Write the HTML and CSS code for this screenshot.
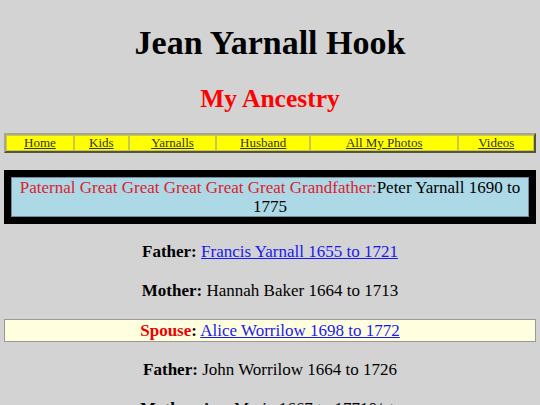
FILE: index.html
```html
<!DOCTYPE html>
<html>
<head>
<meta charset="utf-8">
<link rel="stylesheet" href="styles.css">
</head>
<body>
<h1 class="title">Jean Yarnall Hook</h1>
<h2 class="subtitle">My Ancestry</h2>
<table class="nav">
<tr>
<td><a href="#">Home</a></td>
<td><a href="#">Kids</a></td>
<td><a href="#">Yarnalls</a></td>
<td><a href="#">Husband</a></td>
<td><a href="#">All My Photos</a></td>
<td><a href="#">Videos</a></td>
</tr>
</table>
<div class="person-box">
<div class="person-inner"><span class="rel">Paternal Great Great Great Great Great Grandfather:</span>Peter Yarnall 1690 to 1775</div>
</div>
<p class="line"><b>Father:</b> <a class="link" href="#">Francis Yarnall 1655 to 1721</a></p>
<p class="line"><b>Mother:</b> Hannah Baker 1664 to 1713</p>
<div class="spouse"><b><span class="red">Spouse</span>:</b> <a class="link" href="#">Alice Worrilow 1698 to 1772</a></div>
<p class="line"><b>Father:</b> John Worrilow 1664 to 1726</p>
<p class="line"><b>Mother:</b>Ann Maria 1667 to 17710/p&gt;</p>
</body>
</html>
```
FILE: styles.css
```css
html { background: #d3d3d3; }
body {
  margin: 0;
  padding: 0 4px;
  font-family: "Liberation Serif", "Times New Roman", serif;
  font-size: 17px;
  color: #000;
  text-align: center;
}
.title {
  font-size: 34px;
  line-height: 39px;
  margin: 23px 0 22px;
}
.subtitle {
  font-size: 25.5px;
  line-height: 29px;
  color: #ff0000;
  margin: 0 0 20px;
}
.nav {
  width: 100%;
  border-collapse: separate;
  border-spacing: 0;
  background: #ffff00;
  border: 2px solid;
  border-color: #a8a888 #555533 #555533 #a8a888;
  font-size: 13px;
  line-height: 14px;
}
.nav td {
  border: 1px solid #c8c850;
  padding: 0 2px;
  text-align: center;
}
.nav a { color: #333333; }
.person-box {
  margin-top: 17px;
  border: 7px solid #000;
  background: #000;
}
.person-inner {
  background: #add8e6;
  border: 1px solid #778899;
  line-height: 19px;
  padding: 0 4px;
}
.rel { color: #e0202a; }
.line { margin: 17px 0; line-height: 22px; }
.link { color: #1a1aee; }
.spouse {
  background: #ffffe0;
  border: 1px solid #999999;
  line-height: 21px;
}
.red { color: #ee0000; }
```
